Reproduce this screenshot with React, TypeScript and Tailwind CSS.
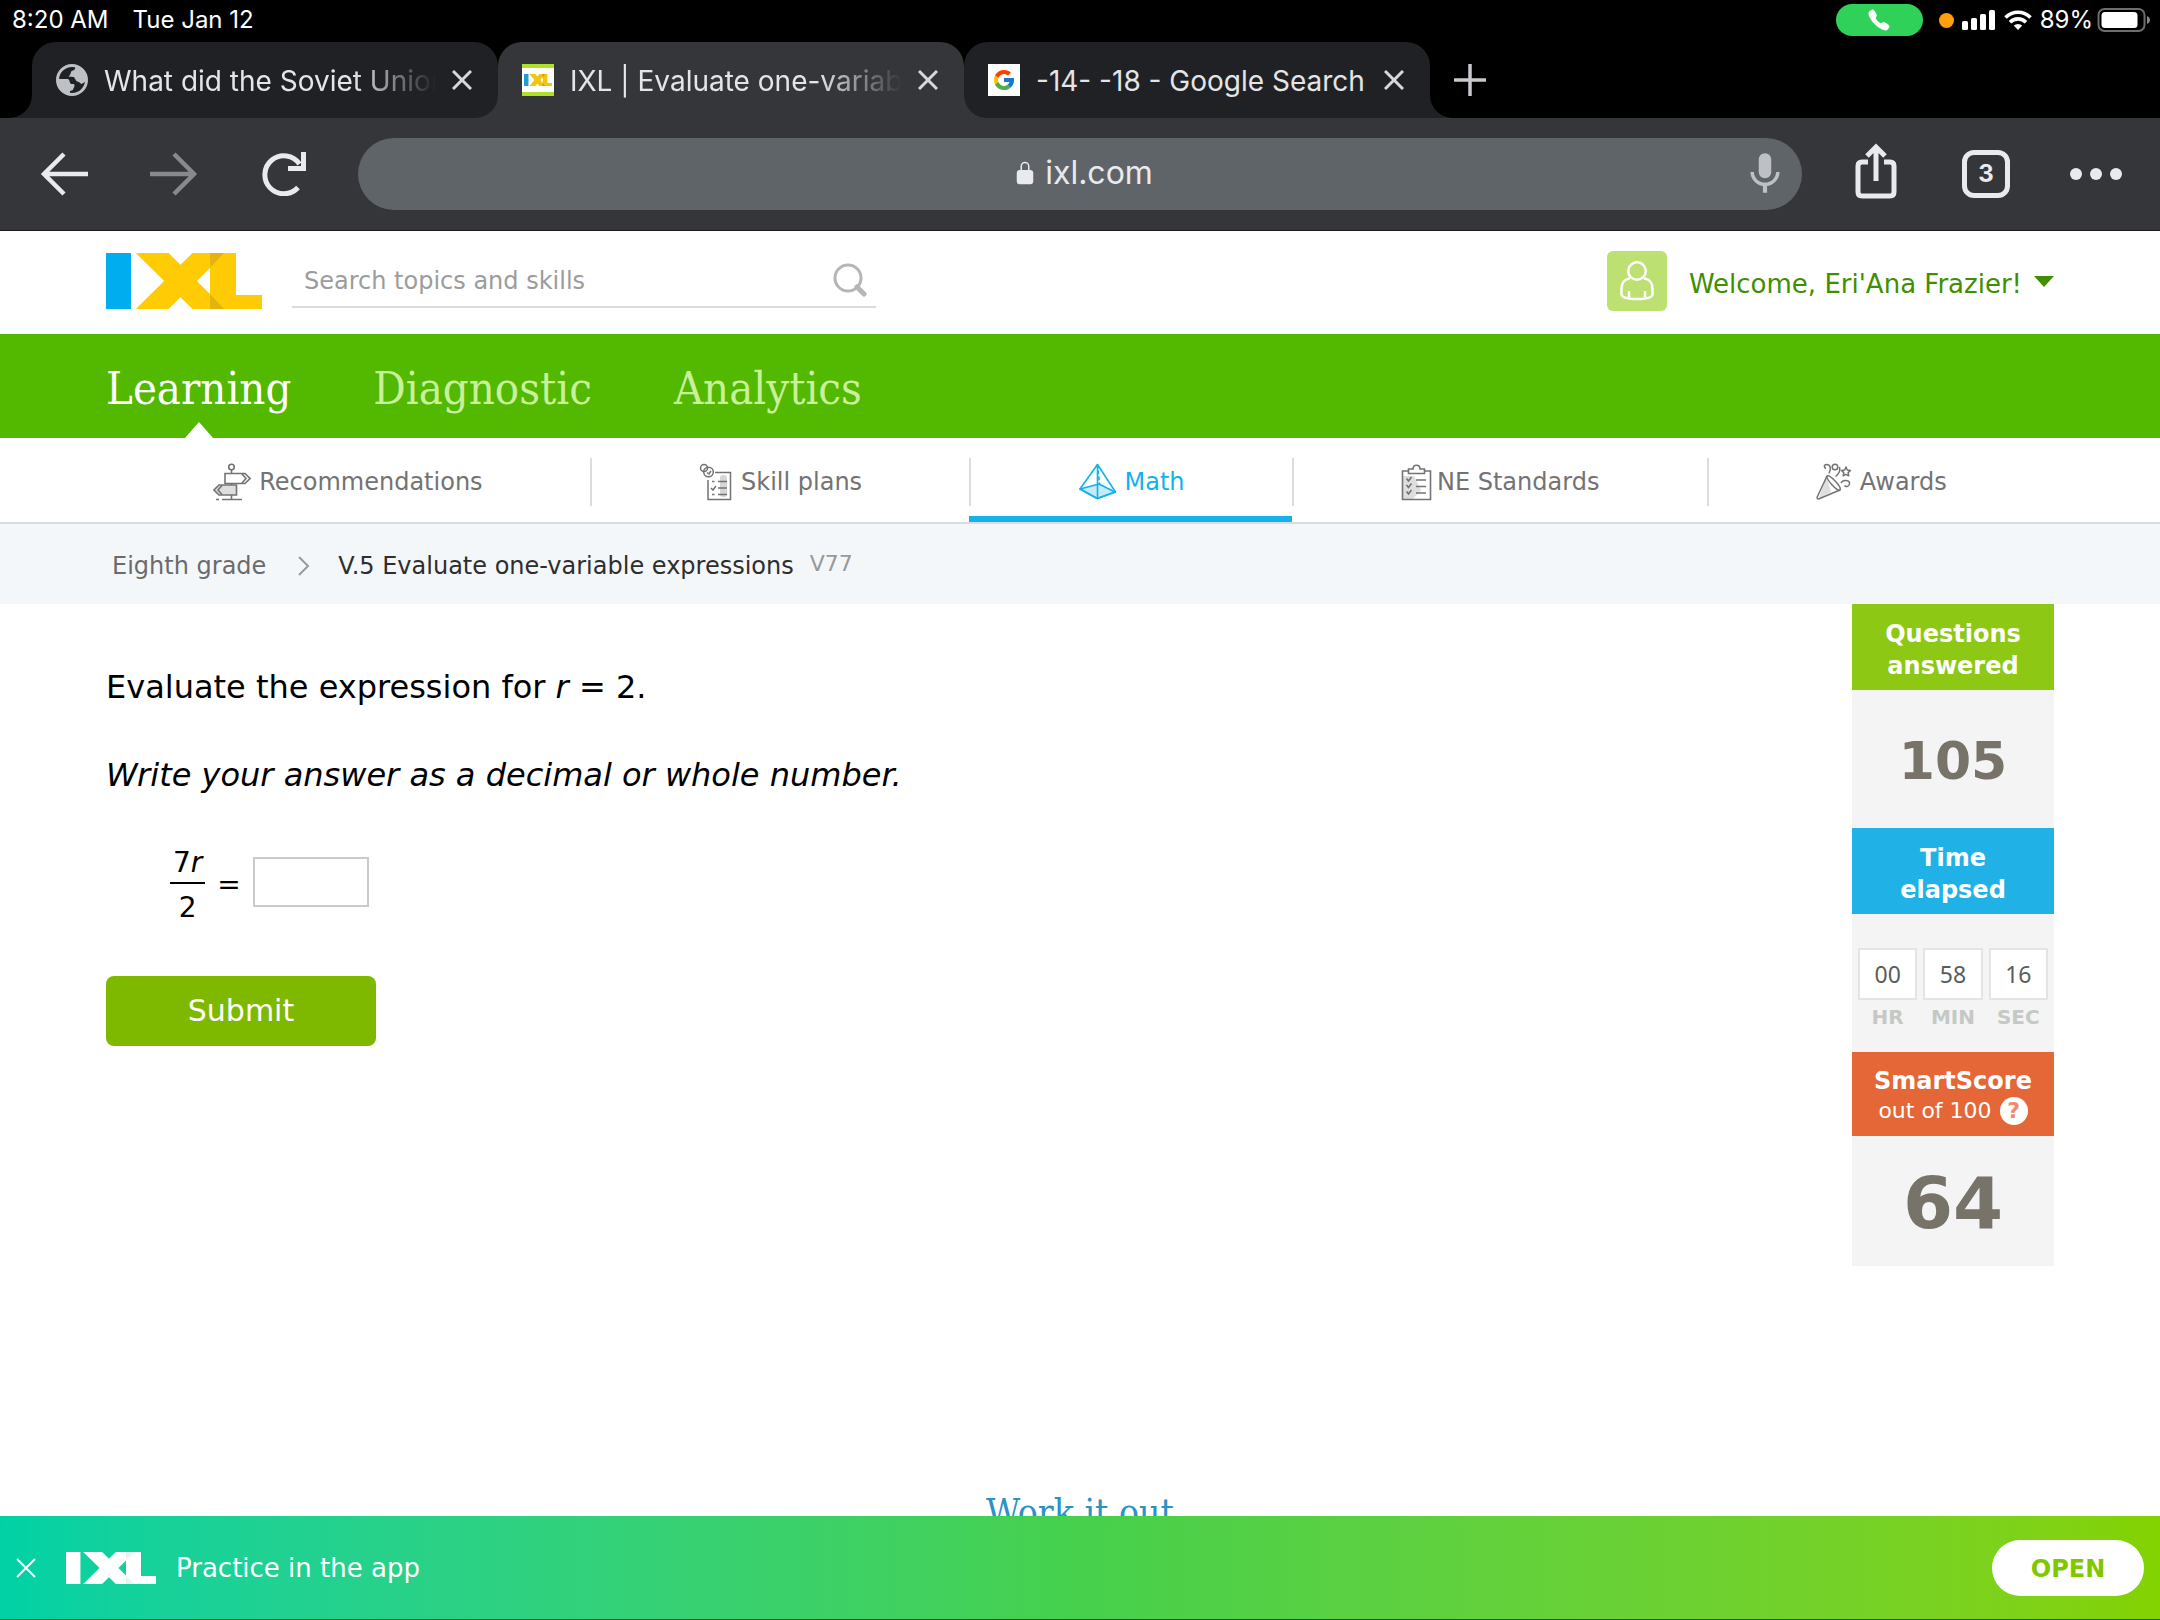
import React, { useState } from "react";
import { MdMic } from "react-icons/md";
import { IoCall, IoLockClosed } from "react-icons/io5";
import { FcGoogle } from "react-icons/fc";

const BROWSER_TABS = [
  { id: "soviet", title: "What did the Soviet Union", icon: "globe" },
  { id: "ixl", title: "IXL | Evaluate one-variable", icon: "ixl" },
  { id: "google", title: "-14- -18 - Google Search", icon: "google" },
];

const MAIN_NAV = ["Learning", "Diagnostic", "Analytics"];

const TIMER = [
  { label: "HR", value: "00" },
  { label: "MIN", value: "58" },
  { label: "SEC", value: "16" },
];

// IXL mark, the shaded corners are where the X folds over the L
const IxlLogo: React.FC<{ className?: string; first: string; rest: string; fold: string }> = ({
  className,
  first,
  rest,
  fold,
}) => (
  <svg viewBox="0 0 156 56" preserveAspectRatio="none" className={className} role="img" aria-label="IXL">
    <rect x="0" y="0" width="25" height="56" fill={first} />
    <line x1="26" y1="-20" x2="123" y2="76" stroke={rest} strokeWidth="23" />
    <line x1="26" y1="76" x2="123" y2="-20" stroke={rest} strokeWidth="23" />
    <rect x="104" y="0" width="26" height="56" fill={rest} />
    <rect x="104" y="42" width="52" height="14" fill={rest} />
    <path d="M104 0h14l-14 15zM104 56h14l-14-15z" fill={fold} />
  </svg>
);

const GlobeIcon = () => (
  <svg viewBox="0 0 32 32" className="size-8 shrink-0" fill="#bdc1c6">
    <circle cx="16" cy="16" r="14.500" fill="none" stroke="#bdc1c6" strokeWidth="3" />
    <path d="M19 1.500C20 5 18 6.500 15.500 7c-1 3-2 5-3 5.500l5 .5c1.500 0 1.500 4 4 4.500 2 .5 3 2 4 2.500l5-3C31 9 27 3 19 1.500z" />
    <path d="M1 15h11c2 1 1.500 4 3 5h3c1.500 3-1 4-1 6l-3 1v4C6 30 1 23 1 15z" />
  </svg>
);

const TabIcon = ({ icon }: { icon: string }) => {
  if (icon === "globe") {
    return <GlobeIcon />;
  }
  if (icon === "google") {
    return (
      <span className="flex size-8 shrink-0 items-center justify-center bg-white">
        <FcGoogle className="size-6" />
      </span>
    );
  }
  return (
    <span className="flex size-8 shrink-0 items-center justify-center border-y-4 border-[#aee12b] bg-white">
      <IxlLogo className="h-3 w-7" first="#1f9fd0" rest="#f2c40f" fold="#c99b00" />
    </span>
  );
};

const CloseIcon = ({ className }: { className?: string }) => (
  <svg viewBox="0 0 20 20" className={className} fill="none" stroke="currentColor">
    <path d="M1 1l18 18M19 1L1 19" />
  </svg>
);

// curved foot at the bottom corners of a browser tab
const TabFoot = ({ className }: { className: string }) => (
  <svg viewBox="0 0 24 24" className={`absolute bottom-0 size-6 ${className}`} fill="currentColor">
    <path d="M24 0v24H0C14 24 24 14 24 0z" />
  </svg>
);

const StatusBar = () => (
  <div className="flex h-[42px] items-start justify-between pl-3 pr-2 font-['Inter',sans-serif] text-2xl leading-10 text-white">
    <div className="flex gap-6 leading-10">
      <span>8:20 AM</span>
      <span>Tue Jan 12</span>
    </div>
    <div className="flex h-10 items-center">
      <span className="mr-4 flex h-8 w-[87px] items-center justify-center rounded-full bg-[#30d158]">
        <IoCall className="size-6" />
      </span>
      <span className="mr-2 size-[15px] rounded-full bg-[#ff9f0a]" />
      <svg viewBox="0 0 34 20" className="mr-2 h-5 w-[34px]" fill="white">
        <rect x="0" y="11" width="6" height="9" rx="1.5" />
        <rect x="9" y="8" width="6" height="12" rx="1.5" />
        <rect x="18" y="4" width="6" height="16" rx="1.5" />
        <rect x="27" y="0" width="6" height="20" rx="1.5" />
      </svg>
      <svg viewBox="0 0 28 20" className="mr-2 h-5 w-7" fill="none" stroke="white" strokeWidth="3.6">
        <path d="M1.5 7.5a17.5 17.5 0 0 1 25 0M6 12.2a11.300 11.300 0 0 1 16 0" />
        <path d="M9.800 15.600a6 6 0 0 1 8.400 0L14 20z" fill="white" stroke="none" />
      </svg>
      <span className="mr-1">89%</span>
      <svg viewBox="0 0 55 26" className="h-[26px] w-[55px]" fill="none">
        <rect x="1.500" y="2" width="46" height="22" rx="6" stroke="#6d6d6d" strokeWidth="2" />
        <rect x="4.500" y="5" width="36" height="16" rx="3.500" fill="white" />
        <path d="M50 9c4 2 4 6 0 8z" fill="#8a8a8a" />
      </svg>
    </div>
  </div>
);

const TabStrip = () => {
  const [active, setActive] = useState("ixl");

  return (
    <div className="flex h-[76px] items-stretch pl-8 font-['Inter',sans-serif]">
      {BROWSER_TABS.map((tab) => {
        const isActive = tab.id === active;
        return (
          <div
            key={tab.id}
            className={`relative flex w-[466px] min-w-0 items-center rounded-t-3xl pl-6 pr-[26px] ${
              isActive ? "z-10 bg-[#35363a] text-[#35363a]" : "bg-[#202124] text-[#202124]"
            }`}
          >
            <TabFoot className="-left-6" />
            <TabFoot className="-right-6 -scale-x-100" />
            <TabIcon icon={tab.icon} />
            <button
              onClick={() => setActive(tab.id)}
              className={`ml-4 min-w-0 flex-1 overflow-hidden whitespace-nowrap pt-[2px] text-left text-[28px] leading-10 text-[#e3e5e8] ${
                tab.icon === "google" ? "" : "mask-r-from-75% mask-r-to-100%"
              }`}
            >
              {tab.title}
            </button>
            <button aria-label={`Close ${tab.title}`} className="ml-4 shrink-0 text-[#d5d8dc]">
              <CloseIcon className="size-5 stroke-[3px]" />
            </button>
          </div>
        );
      })}
      <button aria-label="New tab" className="ml-6 text-[#c6c9ce]">
        <svg viewBox="0 0 32 32" className="size-8" fill="none" stroke="currentColor" strokeWidth="3.500">
          <path d="M16 0v32M0 16h32" />
        </svg>
      </button>
    </div>
  );
};

const Toolbar = () => (
  <div className="flex h-[113px] items-center border-b border-[#1d1b20] bg-[#35363a] pl-10 pr-[38px] text-[#e8eaed]">
    <button aria-label="Back">
      <svg viewBox="0 0 48 44" className="h-11 w-12" fill="none" stroke="currentColor" strokeWidth="4.500">
        <path d="M48 22H4M24 2L4 22l20 20" />
      </svg>
    </button>
    <button aria-label="Forward" className="ml-[62px] text-[#88898c]">
      <svg viewBox="0 0 48 44" className="h-11 w-12" fill="none" stroke="currentColor" strokeWidth="4.500">
        <path d="M0 22h44M24 2l20 20-20 20" />
      </svg>
    </button>
    <button aria-label="Reload" className="ml-16">
      <svg viewBox="0 0 44 44" className="size-11" fill="none" stroke="currentColor" strokeWidth="5">
        <path d="M36 35.500A19 19 0 1 1 37.500 12" />
        <path d="M41.500 0v16.500H26" />
      </svg>
    </button>
    <button className="ml-[52px] flex h-[72px] min-w-0 flex-1 items-center rounded-full bg-[#5f6468] pl-6 pr-5 font-['Inter',sans-serif] text-[32px]">
      <span className="flex flex-1 items-center justify-center gap-2 pb-[2px] pl-9">
        <IoLockClosed className="size-6" />
        ixl.com
      </span>
      <MdMic className="-mx-2 size-[50px] shrink-0 text-[#bdc1c6]" />
    </button>
    <button aria-label="Share" className="ml-[52px] pb-[6px]">
      <svg viewBox="0 0 44 56" className="h-14 w-11" fill="none" stroke="currentColor" strokeWidth="5">
        <path d="M14 19H8q-4 0-4 4v26q0 4 4 4h28q4 0 4-4V23q0-4-4-4h-6" />
        <path d="M22 38V5M13 13l9-9 9 9" />
      </svg>
    </button>
    <button
      aria-label="3 open tabs"
      className="ml-16 flex size-12 items-center justify-center rounded-xl border-[5px] border-current font-['Inter',sans-serif] text-2xl font-bold"
    >
      3
    </button>
    <button aria-label="More" className="ml-[60px] flex gap-2">
      <span className="size-3 rounded-full bg-current" />
      <span className="size-3 rounded-full bg-current" />
      <span className="size-3 rounded-full bg-current" />
    </button>
  </div>
);

const SiteHeader = () => (
  <header className="flex h-[103px] items-center justify-between bg-white px-[106px] pb-[3px]">
    <div className="flex items-center">
      <a href="#home">
        <IxlLogo className="h-14 w-[156px]" first="#00aeef" rest="#ffcb05" fold="#e3b40e" />
      </a>
      <label className="ml-[30px] flex h-[54px] w-[584px] items-center border-b-2 border-[#d9dbdc] pl-3 pr-[9px]">
        <input
          type="search"
          aria-label="Search topics and skills"
          placeholder="Search topics and skills"
          className="min-w-0 flex-1 pt-[2px] text-2xl outline-none placeholder:text-[#9c9c9c]"
        />
        <svg viewBox="0 0 34 34" className="size-[34px]" fill="none" stroke="#b5b5b5">
          <circle cx="15" cy="15" r="13" strokeWidth="3" />
          <path d="M24 24l7 7" strokeWidth="5" strokeLinecap="round" />
        </svg>
      </label>
    </div>
    <button className="flex items-center text-[26px] text-[#3f8f00]">
      <span className="mr-[22px] flex size-[60px] items-center justify-center rounded-md bg-[#bce172]">
        <svg viewBox="0 0 34 40" className="h-10 w-[34px]" fill="none" stroke="white" strokeWidth="2.500">
          <circle cx="17" cy="10" r="8.800" />
          <path d="M10 17.500C4 18 1.500 23 1.500 28v5c0 3.500 6 5 15.500 5s15.500-1.500 15.500-5v-5c0-5-2.500-10-8.500-10.500M9 30v6M25 30v6" />
        </svg>
      </span>
      <span className="pt-[6px]">Welcome, Eri'Ana Frazier!</span>
      <svg viewBox="0 0 20 11" className="ml-3 h-[11px] w-5" fill="currentColor">
        <path d="M0 0h20L10 11z" />
      </svg>
    </button>
  </header>
);

const SignpostIcon = () => (
  <svg viewBox="0 0 38 38" className="size-[38px]" fill="none" stroke="currentColor" strokeWidth="1.600">
    <circle cx="18.500" cy="4" r="2.800" />
    <path d="M18.500 7v3.500M18.500 20v2M18.500 32v4.500M9 36.500h20M3 36.500h3" />
    <path d="M12 10.500h20l5 5-5 5H12zM29 11l4 4.500-4 4.500" />
    <path d="M23.500 22H6l-5 5 5 5h17.500z" fill="#dedede" />
    <path d="M9 22.500L5 27l4 4.500" />
  </svg>
);

const SkillPlanIcon = () => (
  <svg viewBox="0 0 34 38" className="h-[38px] w-[34px]" fill="none" stroke="currentColor" strokeWidth="1.500">
    <rect x="21" y="12" width="7" height="22" rx="3" fill="#d6d6d6" stroke="none" />
    <path d="M16 9.500h15.500v27H9V17" />
    <circle cx="5" cy="5" r="3.500" />
    <circle cx="9.500" cy="9" r="4.800" />
    <path d="M8 9.500l2 1.500 2-3M19 18.500h9M19 25h9M19 31.500h9M13 18.500h2.500M13 31.500h2.500M12 25l2 2 3-4" />
  </svg>
);

const PyramidIcon = () => (
  <svg viewBox="0 0 38 38" className="size-[38px]" fill="none" stroke="currentColor" strokeWidth="1.600" strokeLinejoin="round">
    <path d="M1 26l19-5 16 8-18 6.500z" fill="#c3ebf8" />
    <path d="M18.500 1.500L1 26l17.500 9.500L36.500 29zM18.500 1.500v34" />
    <path d="M18.500 1.500L20.500 21" strokeDasharray="4 2" />
  </svg>
);

const ClipboardIcon = () => (
  <svg viewBox="0 0 32 38" className="h-[38px] w-8" fill="none" stroke="currentColor" strokeWidth="1.600">
    <path d="M2 13h11l7 14-8 9H2z" fill="#dedede" stroke="none" />
    <path d="M7 8H1.500v28.500h28V8H24" />
    <path d="M7.500 10.500V6H12c0-5 7-5 7 0h4.500v4.500z" fill="white" />
    <path d="M5.500 15.500l2 2.500 3-4M5.500 22l2 2.500 3-4M5.500 28.500l2 2.500 3-4M15 17h10M15 23.500h10M15 30h10" />
  </svg>
);

const PartyIcon = () => (
  <svg viewBox="0 0 36 38" className="h-[38px] w-9" fill="none" stroke="currentColor" strokeWidth="1.500" strokeLinejoin="round">
    <path d="M10.500 14L3 35l12-6z" fill="#dedede" stroke="none" />
    <path d="M11 13L1 34.500q0 1.500 1.500 1.500L24 27" />
    <path d="M11 13c3-1.500 15 11 13 14s-14.500-11.500-13-14z" />
    <path d="M10 5.500c-2-.5-2.500-4 .5-4 4 0 5 4 2.500 9" />
    <circle cx="19" cy="4" r="2.800" />
    <path d="M23.500 4c1 4-.5 7-4 9.500M25 20c2-4 9-3 8.500 1-.5 3-4 3-5 1.500" />
    <path d="M30 4l1.300 3 3.200.4-2.400 2.200.6 3.200L30 11.300l-2.800 1.500.6-3.200-2.300-2.200 3.200-.4z" />
  </svg>
);

const SUB_NAV = [
  { label: "Recommendations", icon: <SignpostIcon />, gap: "gap-2" },
  { label: "Skill plans", icon: <SkillPlanIcon />, gap: "gap-2" },
  { label: "Math", icon: <PyramidIcon />, gap: "gap-2", active: true },
  { label: "NE Standards", icon: <ClipboardIcon />, gap: "gap-1" },
  { label: "Awards", icon: <PartyIcon />, gap: "gap-2" },
];

const SubNav = () => (
  <nav className="flex h-[86px] border-b-2 border-[#dadcde] bg-white px-[106px] text-2xl text-[#737373]">
    {SUB_NAV.map((item, i) => (
      <a
        key={item.label}
        href={`#${item.label}`}
        className={`flex flex-auto items-center ${item.active ? "border-b-[6px] border-[#13b2ea] pt-[10px] text-[#13b2ea]" : "pt-1"}`}
      >
        <span className={`flex h-12 flex-1 items-center justify-center ${item.gap} ${i > 0 ? "border-l-2 border-[#dcdcdc]" : ""}`}>
          {item.icon}
          {item.label}
        </span>
      </a>
    ))}
  </nav>
);

const StatHeading = ({ className, children }: { className: string; children: React.ReactNode }) => (
  <h2 className={`px-6 text-center text-2xl leading-8 font-bold text-white ${className}`}>{children}</h2>
);

const ScorePanel = () => (
  <aside className="w-[202px] shrink-0 bg-[#f4f4f4] text-[#787368]">
    <StatHeading className="bg-[#8cc814] pb-2 pt-[14px]">Questions answered</StatHeading>
    <p className="flex h-[138px] items-center justify-center pt-1 text-[52px] font-bold">105</p>
    <StatHeading className="bg-[#20b1e6] pb-2 pt-[14px]">Time elapsed</StatHeading>
    <div className="flex h-[138px] gap-[6px] px-[6px] pt-[34px]">
      {TIMER.map((part) => (
        <div key={part.label} className="flex-1 text-center">
          <div className="flex h-[52px] items-center justify-center border-2 border-[#e4e4e4] bg-white font-['Noto_Sans',sans-serif] text-[23px] text-[#56605a]">
            {part.value}
          </div>
          <div className="pt-[3px] text-xl leading-7 font-bold text-[#c5c9c5]">{part.label}</div>
        </div>
      ))}
    </div>
    <div className="h-[84px] bg-[#e56636] pt-[13px] text-center text-white">
      <h2 className="text-2xl leading-8 font-bold">SmartScore</h2>
      <p className="flex items-center justify-center gap-2 text-[22px] leading-7">
        out of 100
        <button
          aria-label="About SmartScore"
          className="flex size-7 items-center justify-center rounded-full bg-white text-[22px] font-bold text-[#f08a68]"
        >
          ?
        </button>
      </p>
    </div>
    <p className="flex h-[130px] items-center justify-center pt-1 text-[72px] font-bold">64</p>
  </aside>
);

const Question = () => {
  const [answer, setAnswer] = useState("");

  return (
    <form className="flex-1 pt-[61px] text-[32px] leading-[44px] text-black" onSubmit={(e) => e.preventDefault()}>
      <p>
        Evaluate the expression for <i>r</i> = 2.
      </p>
      <p className="mt-11 italic">Write your answer as a decimal or whole number.</p>
      <div className="mt-[46px] flex items-center gap-3 pl-16 text-[28px] leading-9">
        <div className="text-center">
          <div className="border-b-2 border-black px-[3px] pb-px pt-[2px]">
            7<i>r</i>
          </div>
          <div className="pt-[6px]">2</div>
        </div>
        <span>=</span>
        <input
          aria-label="Your answer"
          value={answer}
          onChange={(e) => setAnswer(e.target.value)}
          className="mb-[6px] h-[50px] w-[116px] border-2 border-[#cacaca] bg-white px-2 outline-none"
        />
      </div>
      <button type="submit" className="mt-[50px] h-[70px] w-[270px] rounded-lg bg-[#7eb900] text-[30px] text-white">
        Submit
      </button>
    </form>
  );
};

const AppBanner = () => (
  <footer className="flex h-[104px] shrink-0 items-center border-b border-[#1b5a2c] bg-linear-to-r from-[#00d1a5] via-[#46d04c] to-[#84d200] pl-4 pr-4 text-white">
    <button aria-label="Dismiss">
      <CloseIcon className="size-5 stroke-2" />
    </button>
    <IxlLogo className="ml-[30px] h-8 w-[90px]" first="#ffffff" rest="#ffffff" fold="#e3f5ee" />
    <span className="ml-5 flex-1 pt-[2px] text-[26px]">Practice in the app</span>
    <button className="h-14 w-[152px] rounded-full bg-white pt-[2px] text-2xl font-bold text-[#7fc800]">OPEN</button>
  </footer>
);

const App: React.FC = () => {
  return (
    <div className="flex h-screen flex-col bg-white font-['Verdana','DejaVu_Sans',sans-serif]">
      <div className="shrink-0 bg-black">
        <StatusBar />
        <TabStrip />
        <Toolbar />
      </div>

      <div className="min-h-0 flex-1 overflow-hidden">
        <SiteHeader />

        <nav className="flex h-[104px] gap-[82px] bg-[#52b800] px-[106px] font-['Roboto_Slab','DejaVu_Serif_Condensed','DejaVu_Serif',serif] text-[45px] font-light">
          {MAIN_NAV.map((label) => (
            <a
              key={label}
              href={`#${label}`}
              className={`relative flex items-center pt-[6px] ${label === "Learning" ? "text-white" : "text-[#c9f09a]"}`}
            >
              {label}
              {label === "Learning" && (
                <svg viewBox="0 0 28 16" className="absolute bottom-0 left-1/2 h-4 w-7 -translate-x-1/2" fill="white">
                  <path d="M14 0l14 16H0z" />
                </svg>
              )}
            </a>
          ))}
        </nav>

        <SubNav />

        <div className="flex h-20 items-center bg-[#f4f7fa] pl-[112px] pt-[3px] text-2xl">
          <a href="#eighth-grade" className="text-[#6b6b6b]">
            Eighth grade
          </a>
          <svg viewBox="0 0 12 20" className="ml-8 mr-7 h-5 w-3" fill="none" stroke="#9a9a9a" strokeWidth="2">
            <path d="M1 1l9 9-9 9" />
          </svg>
          <h1 className="text-[#2e2e2e]">V.5 Evaluate one-variable expressions</h1>
          <span className="ml-4 pb-[3px] text-[22px] text-[#999]">V77</span>
        </div>

        <main className="flex px-[106px]">
          <Question />
          <ScorePanel />
        </main>

        <h2 className="mt-[227px] text-center font-['Roboto_Slab','DejaVu_Serif_Condensed','DejaVu_Serif',serif] text-[37px] leading-10 text-[#2a93c5]">
          Work it out
        </h2>
      </div>

      <AppBanner />
    </div>
  );
};

export default App;
